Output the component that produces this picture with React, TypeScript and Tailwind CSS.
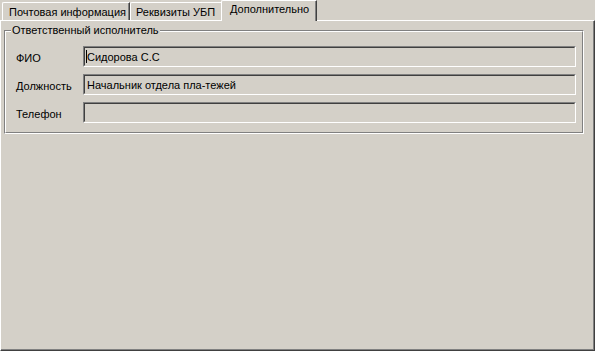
import React from 'react';

// classic win32 3d edges
function Tab({ label, active, width, textPad }: { label: string; active?: boolean; width: string; textPad: string }) {
  if (active) {
    return (
      <div className={`relative z-10 -ml-[2px] -mb-[1px] h-[21px] ${width} bg-[#d4d0c8] border-t border-l border-white border-r border-r-[#404040] rounded-tl-[2px]`}>
        <div className={`h-full border-r border-[#808080] ${textPad} pt-[1px] leading-[14px]`}>{label}</div>
      </div>
    );
  }
  return (
    <div className={`h-[18px] ${width} bg-[#d4d0c8] border-t border-l border-white border-r border-r-[#404040] rounded-tl-[2px]`}>
      <div className={`h-full border-r border-[#808080] ${textPad} pt-[2px] leading-[14px]`}>{label}</div>
    </div>
  );
}

function Field({ label, value, caret }: { label: string; value: string; caret?: boolean }) {
  return (
    <div className="flex h-[21px]">
      <div className="w-[77px] pl-[10px] pt-[5px] leading-[14px]">{label}</div>
      <div className="w-[493px] h-[21px] border-t border-l border-[#808080] border-r border-b border-r-white border-b-white">
        <div className="h-full border-t border-l border-[#404040] border-r border-b border-r-[#d4d0c8] border-b-[#d4d0c8] flex items-center pl-[1px] leading-[14px]">
          {caret && <span className="w-[1px] h-[13px] bg-black" />}
          <span className={caret ? 'pl-0' : 'pl-[1px]'}>{value}</span>
        </div>
      </div>
    </div>
  );
}

export default function App() {
  return (
    <div
      className="w-[595px] h-[351px] bg-[#d4d0c8] flex flex-col text-[11px] text-black"
      style={{ fontFamily: '"Liberation Sans", Arial, sans-serif' }}
    >
      <div className="flex items-end h-[20px] pl-[2px]">
        <Tab label="Почтовая информация" width="w-[128px]" textPad="pl-[6px]" />
        <Tab label="Реквизиты УБП" width="w-[93px]" textPad="pl-[5px]" />
        <Tab label="Дополнительно" width="w-[96px]" textPad="pl-[8px]" active />
      </div>

      <div className="flex-1 border-t border-l border-white border-r border-b border-r-[#404040] border-b-[#404040]">
        <div className="h-full border-r border-b border-[#808080] pt-[9px] pl-[3px]">
          <div className="relative w-[580px] h-[104px] border-t border-l border-[#808080] border-r border-b border-r-white border-b-white">
            <span className="absolute -top-[8px] left-[6px] bg-[#d4d0c8] px-[1px] leading-[14px]">Ответственный исполнитель</span>
            <div className="h-full border-t border-l border-white border-r border-b border-r-[#808080] border-b-[#808080] pt-[14px] flex flex-col gap-[7px]">
              <Field label="ФИО" value="Сидорова С.С" caret />
              <Field label="Должность" value="Начальник отдела пла-тежей" />
              <Field label="Телефон" value="" />
            </div>
          </div>
        </div>
      </div>
    </div>
  );
}
